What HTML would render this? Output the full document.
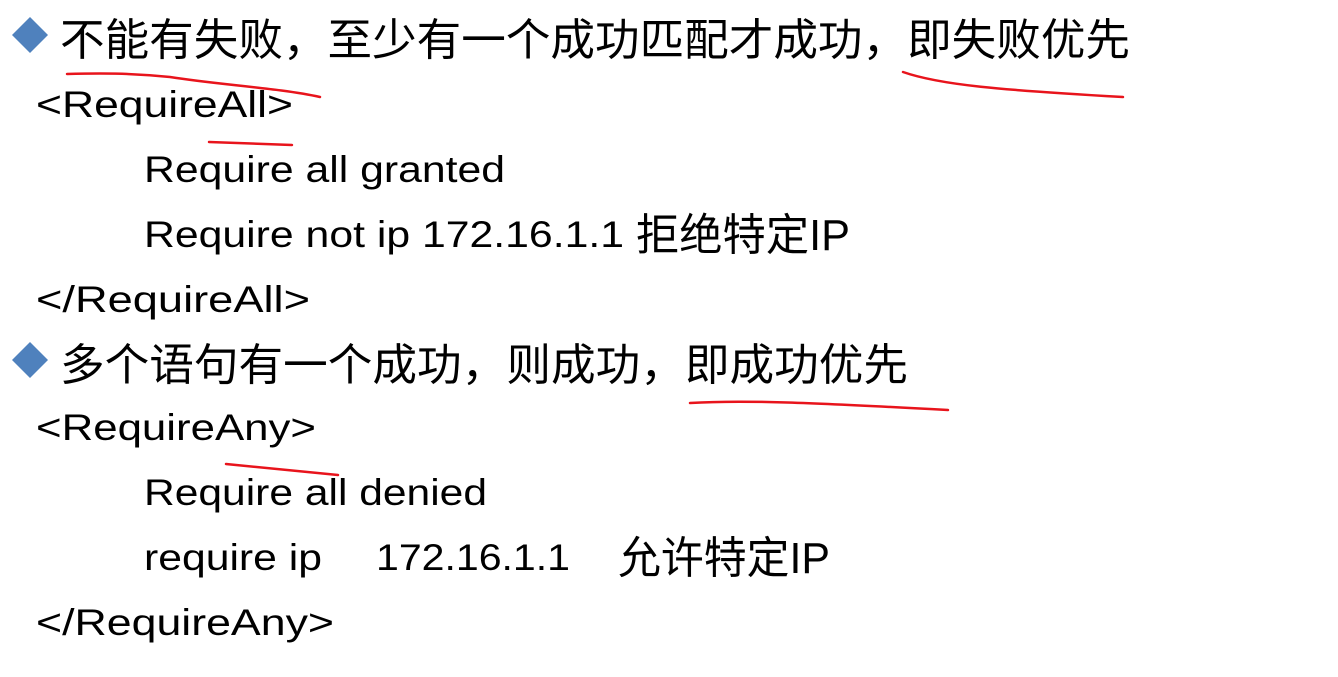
<!DOCTYPE html>
<html><head><meta charset="utf-8"><style>
html,body{margin:0;padding:0;background:#fff;width:1338px;height:677px;overflow:hidden}
svg{display:block}
.c{font-family:"Liberation Sans","Noto Sans CJK SC",sans-serif;font-size:44px;fill:#000}
.l{font-family:"Liberation Sans","Noto Sans CJK SC",sans-serif;font-size:37px;fill:#000}
.r{fill:none;stroke:#e8141c;stroke-width:2.5;stroke-linecap:round}
</style></head><body>
<svg width="1338" height="677" viewBox="0 0 1338 677">
<polygon points="30,17 48,35 30,53 12,35" fill="#4f81bd"/>
<polygon points="30,342 48,360 30,378 12,360" fill="#4f81bd"/>
<text class="c" x="60" y="55" textLength="1070" lengthAdjust="spacingAndGlyphs">不能有失败，至少有一个成功匹配才成功，即失败优先</text>
<text class="l" x="36" y="117" textLength="257" lengthAdjust="spacingAndGlyphs">&lt;RequireAll&gt;</text>
<text class="l" x="144" y="182" textLength="361" lengthAdjust="spacingAndGlyphs">Require all granted</text>
<text class="l" x="144" y="247" textLength="480" lengthAdjust="spacingAndGlyphs">Require not ip 172.16.1.1</text>
<text class="c" x="636" y="250" textLength="214" lengthAdjust="spacingAndGlyphs">拒绝特定IP</text>
<text class="l" x="36" y="312" textLength="274" lengthAdjust="spacingAndGlyphs">&lt;/RequireAll&gt;</text>
<text class="c" x="60" y="380" textLength="848" lengthAdjust="spacingAndGlyphs">多个语句有一个成功，则成功，即成功优先</text>
<text class="l" x="36" y="440" textLength="280" lengthAdjust="spacingAndGlyphs">&lt;RequireAny&gt;</text>
<text class="l" x="144" y="505" textLength="343" lengthAdjust="spacingAndGlyphs">Require all denied</text>
<text class="l" x="144" y="570" textLength="178" lengthAdjust="spacingAndGlyphs">require ip</text>
<text class="l" x="376" y="570" textLength="194" lengthAdjust="spacingAndGlyphs">172.16.1.1</text>
<text class="c" x="618" y="573" textLength="212" lengthAdjust="spacingAndGlyphs">允许特定IP</text>
<text class="l" x="36" y="635" textLength="298" lengthAdjust="spacingAndGlyphs">&lt;/RequireAny&gt;</text>
<path class="r" d="M67,74 C100,73 130,73 170,77 C220,85 280,88 320,97"/>
<path class="r" d="M209,142 C240,143 270,144 292,145"/>
<path class="r" d="M903,72 C940,85 1000,90 1123,97"/>
<path class="r" d="M690,403 C740,400 800,402 948,410"/>
<path class="r" d="M226,464 L338,475"/>
</svg>
</body></html>
